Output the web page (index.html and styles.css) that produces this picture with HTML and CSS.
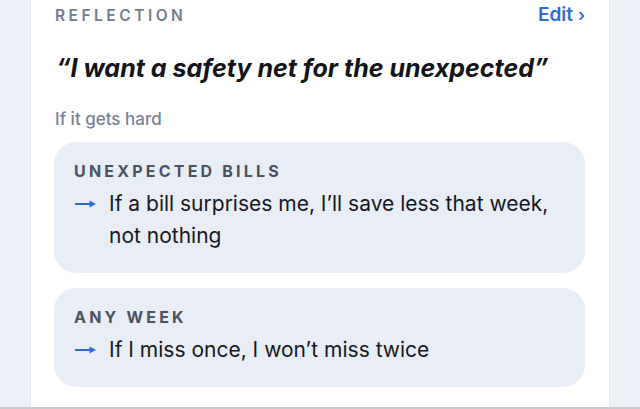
FILE: index.html
```html
<!DOCTYPE html>
<html>
<head>
<meta charset="utf-8">
<link rel="stylesheet" href="styles.css">
</head>
<body>
<div class="page">
  <section class="card">
    <header class="card-head">
      <span class="eyebrow">REFLECTION</span>
      <a class="edit">Edit<span class="chev">›</span></a>
    </header>
    <h1 class="quote">“I want a safety net for the unexpected”</h1>
    <p class="sub">If it gets hard</p>
    <div class="plans">
      <div class="plan">
        <div class="plan-title">UNEXPECTED BILLS</div>
        <div class="plan-row">
          <svg class="arrow" width="21" height="8" viewBox="0 0 21 8"><path d="M0 4H17" stroke="#2e6bd6" stroke-width="2"/><path d="M14.5 0.6L21 4L14.5 7.4Z" fill="#2e6bd6"/></svg>
          <span class="plan-text">If a bill surprises me, I’ll save less that week, not nothing</span>
        </div>
      </div>
      <div class="plan">
        <div class="plan-title">ANY WEEK</div>
        <div class="plan-row">
          <svg class="arrow" width="21" height="8" viewBox="0 0 21 8"><path d="M0 4H17" stroke="#2e6bd6" stroke-width="2"/><path d="M14.5 0.6L21 4L14.5 7.4Z" fill="#2e6bd6"/></svg>
          <span class="plan-text">If I miss once, I won’t miss twice</span>
        </div>
      </div>
    </div>
  </section>
</div>
<div class="bottom-edge"></div>
</body>
</html>
```
FILE: styles.css
```css
html, body {
  margin: 0;
  padding: 0;
  height: 100%;
}
body {
  background: #eef1f7;
  font-family: Inter, "Noto Sans", sans-serif;
  overflow: hidden;
}
.page {
  padding: 0 31px;
  height: 407px;
}
.card {
  background: #ffffff;
  height: 100%;
  box-sizing: border-box;
  padding: 3px 24px 0 23px;
  box-shadow: 0 0 0 1px #e6e9f0;
}
.card-head {
  display: flex;
  justify-content: space-between;
  align-items: baseline;
  padding-left: 1px;
}
.eyebrow {
  font-size: 15.5px;
  font-weight: 600;
  letter-spacing: 3.5px;
  color: #737b8c;
}
.edit {
  font-size: 19px;
  font-weight: 600;
  color: #2e6bd6;
  display: flex;
  align-items: baseline;
  gap: 5px;
}
.chev {
  font-size: 17px;
}
.quote {
  margin: 26px 0 0 2px;
  font-size: 25px;
  font-weight: 700;
  font-style: italic;
  color: #121417;
  letter-spacing: 0;
  line-height: 32px;
}
.sub {
  margin: 23px 0 0 1px;
  font-size: 17px;
  font-weight: 500;
  color: #7a8292;
  line-height: 24px;
}
.plans {
  display: flex;
  flex-direction: column;
  gap: 15px;
  margin-top: 11px;
}
.plan {
  background: #e9edf6;
  border-radius: 22px;
  padding: 19px 20px 21px 20px;
}
.plan-title {
  font-size: 16px;
  font-weight: 700;
  letter-spacing: 3.2px;
  color: #4b5262;
  line-height: 20px;
}
.plan-row {
  display: flex;
  align-items: flex-start;
  gap: 13px;
  margin-top: 7px;
}
.arrow {
  flex: none;
  margin: 12px 0 0 1px;
}
.plan-text {
  font-size: 21px;
  color: #16181d;
  line-height: 32px;
  letter-spacing: 0;
}
.bottom-edge {
  height: 2px;
  background: #c7c9ce;
}
```
